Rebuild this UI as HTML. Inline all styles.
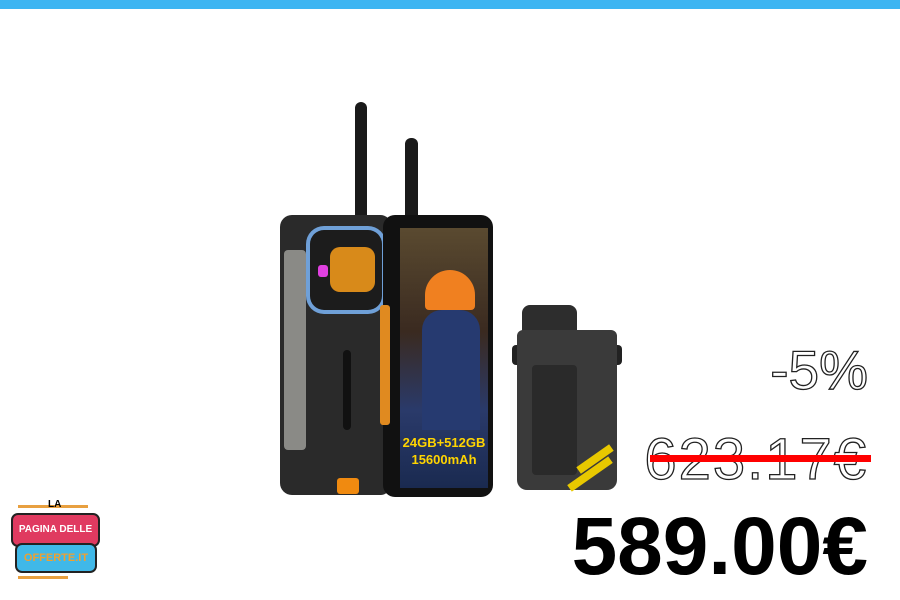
<!DOCTYPE html>
<html><head><meta charset="utf-8"><style>
body{margin:0;width:900px;height:600px;background:#fff;position:relative;overflow:hidden;font-family:"Liberation Sans",sans-serif}
.a{position:absolute}
.o{color:#fff;-webkit-text-stroke:1.3px #222;font-weight:400;right:32px;text-align:right}
</style></head><body>
<div class="a" style="left:0;top:0;width:900px;height:9px;background:#3db5f2"></div>

<div class="a" style="left:355px;top:102px;width:12px;height:120px;background:#1a1a1a;border-radius:6px 6px 0 0"></div>
<div class="a" style="left:405px;top:138px;width:13px;height:85px;background:#1a1a1a;border-radius:6px 6px 0 0"></div>
<div class="a" style="left:280px;top:215px;width:112px;height:280px;background:#2a2a2a;border-radius:12px"></div>
<div class="a" style="left:284px;top:250px;width:22px;height:200px;background:#8a8a86;border-radius:4px"></div>
<div class="a" style="left:310px;top:230px;width:72px;height:80px;background:#1c1c1c;border-radius:14px;box-shadow:0 0 0 4px #6fa0d8"></div>
<div class="a" style="left:330px;top:247px;width:45px;height:45px;background:#d88a1a;border-radius:10px"></div>
<div class="a" style="left:318px;top:265px;width:10px;height:12px;background:#e040e0;border-radius:3px"></div>
<div class="a" style="left:343px;top:350px;width:8px;height:80px;background:#111;border-radius:4px"></div>
<div class="a" style="left:337px;top:478px;width:22px;height:16px;background:#f08a10;border-radius:3px"></div>
<div class="a" style="left:383px;top:215px;width:110px;height:282px;background:#111;border-radius:12px"></div>
<div class="a" style="left:400px;top:228px;width:88px;height:260px;background:linear-gradient(#5a4a30,#3a2a20 40%,#2a3a6a 70%,#1a2a50)"></div>
<div class="a" style="left:425px;top:270px;width:50px;height:40px;background:#f08020;border-radius:25px 25px 4px 4px"></div>
<div class="a" style="left:422px;top:310px;width:58px;height:120px;background:#263a70;border-radius:20px 20px 0 0"></div>
<div class="a" style="left:400px;top:434px;width:88px;font:bold 13px 'Liberation Sans';color:#ffd400;text-align:center;line-height:17px;white-space:nowrap">24GB+512GB<br>15600mAh</div>
<div class="a" style="left:380px;top:305px;width:10px;height:120px;background:#e08a20;border-radius:3px"></div>
<div class="a" style="left:512px;top:345px;width:110px;height:20px;background:#222;border-radius:4px"></div>
<div class="a" style="left:522px;top:305px;width:55px;height:60px;background:#2d2d2d;border-radius:8px 8px 0 0"></div>
<div class="a" style="left:517px;top:330px;width:100px;height:160px;background:#3a3a3a;border-radius:6px 6px 10px 10px"></div>
<div class="a" style="left:532px;top:365px;width:45px;height:110px;background:#2a2a2a;border-radius:4px"></div>
<div class="a" style="left:575px;top:455px;width:40px;height:8px;background:#e8c800;transform:rotate(-35deg)"></div>
<div class="a" style="left:565px;top:470px;width:50px;height:8px;background:#e8c800;transform:rotate(-35deg)"></div>

<div class="a o" style="top:341px;font-size:55px;line-height:58px">-5%</div>
<div class="a o" style="top:430px;font-size:58px;line-height:60px;letter-spacing:2px">623.17€</div>
<div class="a" style="left:650px;top:455px;width:221px;height:7px;background:#f00"></div>
<div class="a" style="right:32px;top:502px;font-size:82px;font-weight:bold;line-height:90px;color:#000">589.00€</div>

<div class="a" style="left:18px;top:505px;width:70px;height:3px;background:#e8a040"></div>
<div class="a" style="left:48px;top:499px;font:bold 10px 'Liberation Sans'">LA</div>
<div class="a" style="left:11px;top:513px;width:85px;height:30px;background:#e03a60;border:2px solid #222;border-radius:7px;color:#fff;font:bold 10px 'Liberation Sans';text-align:center;line-height:30px;white-space:nowrap">PAGINA DELLE</div>
<div class="a" style="left:15px;top:543px;width:78px;height:26px;background:#40b8e8;border:2px solid #222;border-radius:7px;color:#f0a030;font:bold 11px 'Liberation Sans';text-align:center;line-height:26px;white-space:nowrap">OFFERTE.IT</div>
<div class="a" style="left:18px;top:576px;width:50px;height:3px;background:#e8a040"></div>
</body></html>
